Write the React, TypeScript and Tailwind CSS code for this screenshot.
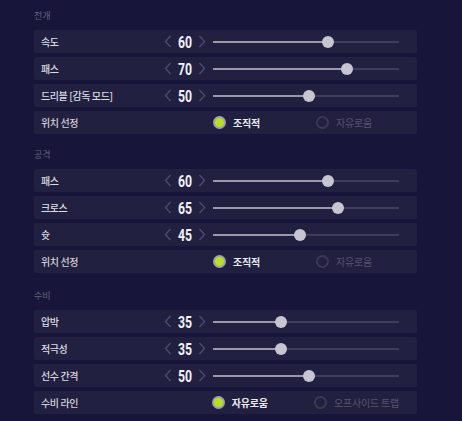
import React from 'react'

type SliderRow = { kind: 'slider'; label: string; value: number }
type RadioRow = { kind: 'radio'; label: string; options: [string, string]; selected: 0 | 1 }
type Row = SliderRow | RadioRow

const sections: { title: string; mt: string; rows: Row[] }[] = [
  {
    title: '전개',
    mt: 'mt-[9px]',
    rows: [
      { kind: 'slider', label: '속도', value: 60 },
      { kind: 'slider', label: '패스', value: 70 },
      { kind: 'slider', label: '드리블 [감독 모드]', value: 50 },
      { kind: 'radio', label: '위치 선정', options: ['조직적', '자유로움'], selected: 0 },
    ],
  },
  {
    title: '공격',
    mt: 'mt-[14px]',
    rows: [
      { kind: 'slider', label: '패스', value: 60 },
      { kind: 'slider', label: '크로스', value: 65 },
      { kind: 'slider', label: '슛', value: 45 },
      { kind: 'radio', label: '위치 선정', options: ['조직적', '자유로움'], selected: 0 },
    ],
  },
  {
    title: '수비',
    mt: 'mt-[16px]',
    rows: [
      { kind: 'slider', label: '압박', value: 35 },
      { kind: 'slider', label: '적극성', value: 35 },
      { kind: 'slider', label: '선수 간격', value: 50 },
      { kind: 'radio', label: '수비 라인', options: ['자유로움', '오프사이드 트랩'], selected: 0 },
    ],
  },
]

function Chevron({ dir }: { dir: 'left' | 'right' }) {
  return (
    <svg width="8" height="13" viewBox="0 0 8 13" fill="none">
      <path
        d={dir === 'left' ? 'M6.5 1 L1.5 6.5 L6.5 12' : 'M1.5 1 L6.5 6.5 L1.5 12'}
        stroke="#4f4d6a"
        strokeWidth="1.3"
      />
    </svg>
  )
}

function Slider({ value }: { value: number }) {
  const x = 1 + value * 1.9
  return (
    <div className="relative ml-[7px] h-[12px] w-[186px]">
      <div className="absolute left-0 right-0 top-[5px] h-[2px] bg-[#3f3d5a]" />
      <div className="absolute left-0 top-[5px] h-[2px] bg-[#9b99a9]" style={{ width: x }} />
      <div
        className="absolute top-[0px] h-[12px] w-[12px] rounded-full bg-[#c6c5d1]"
        style={{ left: x - 6 }}
      />
    </div>
  )
}

function Radio({ on, text }: { on: boolean; text: string }) {
  return (
    <div className="flex items-center whitespace-nowrap">
      {on ? (
        <div className="flex h-[13px] w-[13px] items-center justify-center rounded-full bg-[#a3a1ae]">
          <div className="h-[9px] w-[9px] rounded-full bg-[#b6e11f]" />
        </div>
      ) : (
        <div className="h-[13px] w-[13px] rounded-full border-2 border-[#3b3954]" />
      )}
      <span
        className={
          on
            ? 'ml-[7px] text-[10px] font-bold tracking-[-0.2px] text-[#ececf2]'
            : 'ml-[7px] text-[10px] tracking-[-0.2px] text-[#55536e]'
        }
      >
        {text}
      </span>
    </div>
  )
}

export default function App() {
  return (
    <div className="h-[421px] w-[462px] overflow-hidden bg-[#17153a] pl-[34px] font-['Noto_Sans_CJK_KR','Noto_Sans',sans-serif]">
      <div className="w-[383px]">
        {sections.map((s) => (
          <div key={s.title} className={s.mt}>
            <div className="mb-[7px] h-[14px] text-[9px] leading-[14px] text-[#65637d]">{s.title}</div>
            <div className="flex flex-col gap-[4px]">
              {s.rows.map((r, i) => (
                <div key={i} className="flex h-[23px] items-center rounded-[2px] bg-[#222040] pl-[7px] pr-[18px]">
                  {r.kind === 'slider' ? (
                    <>
                      <div className="w-[123px] whitespace-nowrap text-[10px] font-medium tracking-[-0.4px] text-[#dcdce4]">
                        {r.label}
                      </div>
                      <Chevron dir="left" />
                      <div className="ml-[2px] w-[22px] scale-x-[0.72] text-center font-['Roboto',sans-serif] text-[17px] font-bold leading-[20px] text-[#f2f2f6]">
                        {r.value}
                      </div>
                      <div className="ml-[2px]">
                        <Chevron dir="right" />
                      </div>
                      <Slider value={r.value} />
                    </>
                  ) : (
                    <>
                      <div className="w-[172px] whitespace-nowrap text-[10px] font-medium tracking-[-0.4px] text-[#d0d0da]">
                        {r.label}
                      </div>
                      <div className="w-[103px]">
                        <Radio on={r.selected === 0} text={r.options[0]} />
                      </div>
                      <Radio on={r.selected === 1} text={r.options[1]} />
                    </>
                  )}
                </div>
              ))}
            </div>
          </div>
        ))}
      </div>
    </div>
  )
}
